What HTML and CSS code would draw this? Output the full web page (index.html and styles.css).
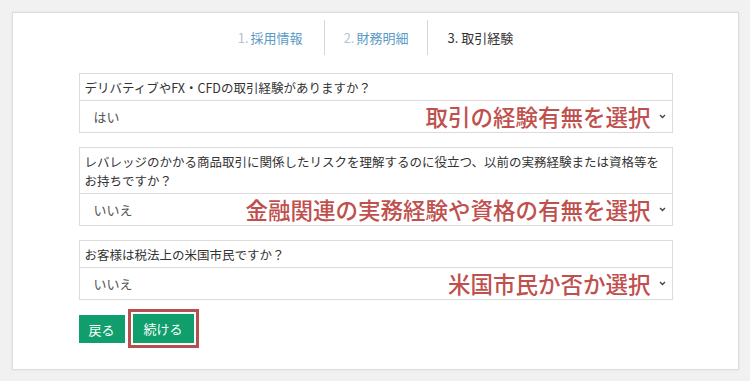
FILE: index.html
```html
<html>
  <head>
    <meta charset="utf-8" />
    <title>取引経験</title>
    <link rel="stylesheet" href="styles.css">
  </head>
  <body>
    <section class="card">
      <nav class="steps">
        <span class="step done"><span class="num">1.</span> 採用情報</span>
        <span class="step done"><span class="num">2.</span> 財務明細</span>
        <span class="step current">3. 取引経験</span>
      </nav>

      <form class="form">
        <div class="field">
          <div class="question">デリバティブやFX・CFDの取引経験がありますか？</div>
          <div class="answer">
            <span class="value">はい</span>
            <span class="note">取引の経験有無を選択</span>
            <svg class="chev" width="7" height="5" viewBox="0 0 7 5"><path d="M1 1l2.5 2.5L6 1" fill="none" stroke="#444" stroke-width="1.4"/></svg>
          </div>
        </div>

        <div class="field">
          <div class="question">レバレッジのかかる商品取引に関係したリスクを理解するのに役立つ、以前の実務経験または資格等をお持ちですか？</div>
          <div class="answer">
            <span class="value">いいえ</span>
            <span class="note">金融関連の実務経験や資格の有無を選択</span>
            <svg class="chev" width="7" height="5" viewBox="0 0 7 5"><path d="M1 1l2.5 2.5L6 1" fill="none" stroke="#444" stroke-width="1.4"/></svg>
          </div>
        </div>

        <div class="field">
          <div class="question">お客様は税法上の米国市民ですか？</div>
          <div class="answer">
            <span class="value">いいえ</span>
            <span class="note">米国市民か否か選択</span>
            <svg class="chev" width="7" height="5" viewBox="0 0 7 5"><path d="M1 1l2.5 2.5L6 1" fill="none" stroke="#444" stroke-width="1.4"/></svg>
          </div>
        </div>

        <div class="actions">
          <button type="button" class="btn">戻る</button>
          <button type="button" class="btn btn-next">続ける</button>
        </div>
      </form>
    </section>
  </body>
</html>
```

FILE: styles.css
```css
html,
body {
  padding: 0;
  margin: 0;
  font-family: "Noto Sans CJK JP", "Noto Sans", sans-serif;
}

body {
  background: #f1f1f1;
  color: #333;
  padding: 12px 11px 11px 12px;
}

.card {
  box-sizing: border-box;
  width: 727px;
  height: 358px;
  background: #fff;
  border: 1px solid #dcdcdc;
  box-shadow: 0 0 2px rgba(0, 0, 0, 0.08);
  padding-top: 7px;
}

.steps {
  display: flex;
  justify-content: center;
  height: 35px;
  margin-bottom: 18px;
}

.steps .step {
  display: flex;
  align-items: center;
  padding: 0 19px;
  font-size: 13px;
  color: #333;
}

.steps .step:first-child {
  padding-right: 21px;
}

.steps .step + .step {
  border-left: 1px solid #d6d6d6;
}

.steps .done {
  color: #5a9ac6;
}

.steps .num {
  color: #b3c3cf;
  margin-right: 2px;
}

.form {
  width: 594px;
  margin: 0 auto;
}

.field {
  border: 1px solid #dcdcdc;
  margin-bottom: 14px;
}

.question {
  padding: 4px 6px 3px 5px;
  font-size: 12.5px;
  line-height: 19px;
  color: #333;
}

.answer {
  display: flex;
  align-items: center;
  height: 31px;
  border-top: 1px solid #dcdcdc;
  padding: 0 6px 0 14px;
}

.answer .value {
  font-size: 13px;
  color: #555;
}

.answer .note {
  margin-left: auto;
  margin-right: 8px;
  font-size: 22.5px;
  font-weight: 500;
  line-height: 1;
  color: #c0504d;
}

.chev {
  display: block;
}

.actions {
  display: flex;
  gap: 8px;
  padding-top: 1px;
}

.btn {
  outline: none;
  border: none;
  height: 28px;
  padding: 0 10px;
  font-family: inherit;
  font-size: 13px;
  color: #fff;
  background-color: #0f9e6c;
}

.btn-next {
  height: 29px;
  margin-top: -1px;
  padding: 0 11px;
  outline: 3px solid #b5504f;
  outline-offset: 2px;
}
```
